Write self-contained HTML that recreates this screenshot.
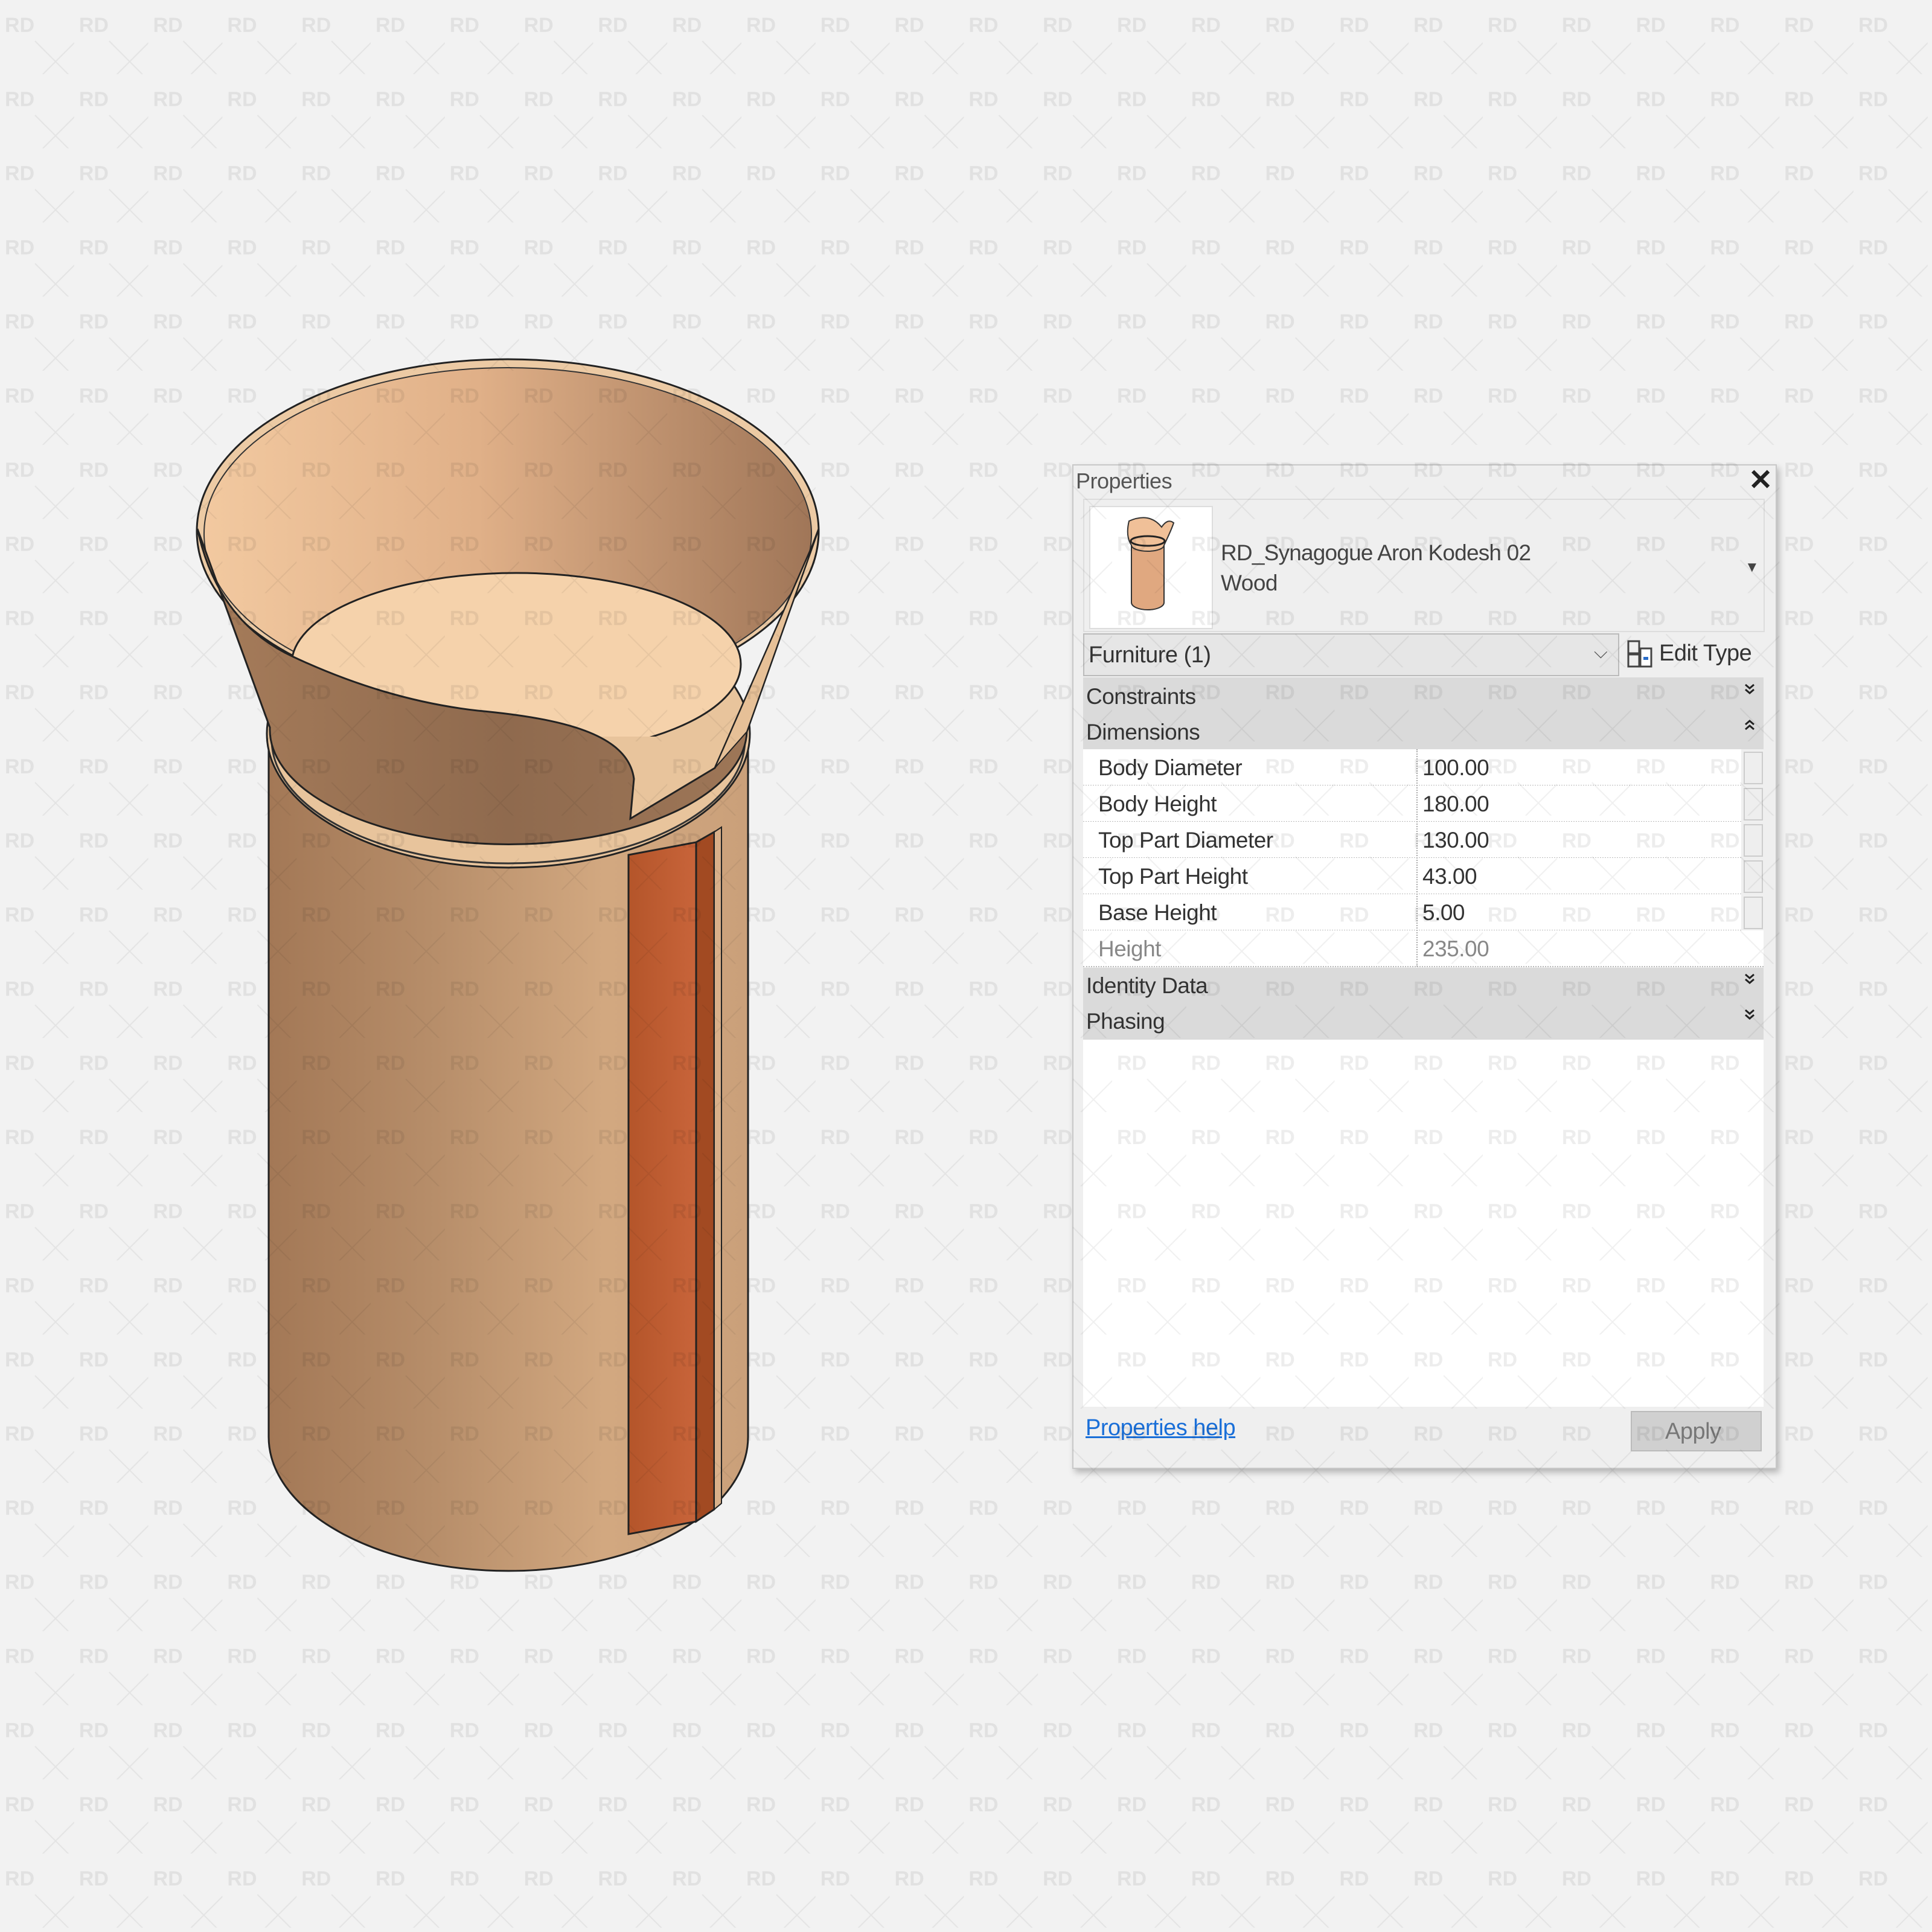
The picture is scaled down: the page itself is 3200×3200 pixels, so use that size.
<!DOCTYPE html>
<html><head><meta charset="utf-8"><style>
html,body{margin:0;padding:0}
body{width:3200px;height:3200px;background:#f2f2f2;position:relative;overflow:hidden;font-family:"Liberation Sans",sans-serif}
.a{position:absolute}
.t{position:absolute;font-size:37px;color:#333;line-height:1;white-space:nowrap;letter-spacing:-0.5px}
.band{position:absolute;left:1794px;width:1127px;background:#dadada}
.row{position:absolute;left:1794px;width:1090px;height:59px;background:#fff;border-bottom:2px dotted #bbb}
.sc{position:absolute;left:2888px;width:28px;height:50px;background:#eee;border:2px solid #ccc}
.chev{position:absolute;left:2886px}
</style></head><body>

<svg class="a" style="left:0;top:0" width="3200" height="3200" viewBox="0 0 3200 3200">
<defs>
<linearGradient id="body" x1="0" x2="1">
<stop offset="0" stop-color="#a37856"/><stop offset="0.35" stop-color="#b78e6a"/><stop offset="0.7" stop-color="#d2a880"/><stop offset="1" stop-color="#caa07a"/></linearGradient>
<linearGradient id="cone" x1="0" x2="1">
<stop offset="0" stop-color="#a67c5a"/><stop offset="0.5" stop-color="#8f6a4e"/><stop offset="1" stop-color="#a27a5a"/></linearGradient>
<linearGradient id="inner" x1="0" x2="1">
<stop offset="0" stop-color="#f2c9a0"/><stop offset="0.45" stop-color="#e0b088"/><stop offset="1" stop-color="#a07658"/></linearGradient>
<linearGradient id="red" x1="0" x2="1">
<stop offset="0" stop-color="#b4552a"/><stop offset="1" stop-color="#c8643a"/></linearGradient>
<clipPath id="cl"><path d="M338,880 A503,275 0 0 1 1344,880 L1225,1220 L455,1220 Z"/></clipPath>
</defs>
<!-- body -->
<path d="M445,1215 L445,2380 A397,222 0 0 0 1239,2380 L1239,1215 Z" fill="url(#body)" stroke="#222" stroke-width="3"/>
<path d="M1041,1416 L1153,1395 L1153,2520 L1041,2541 Z" fill="url(#red)" stroke="#222" stroke-width="3"/>
<path d="M1153,1395 L1183,1378 L1183,2500 L1153,2520 Z" fill="#a24a22" stroke="#222" stroke-width="3"/>
<path d="M1183,1378 L1195,1370 L1195,2490 L1183,2500 Z" fill="#d9b08a" stroke="#222" stroke-width="2"/>
<!-- ring -->
<ellipse cx="842" cy="1215" rx="400" ry="222" fill="#e8c49c" stroke="#222" stroke-width="3"/>
<path d="M450,1225 A392,205 0 0 0 1234,1225" fill="none" stroke="#333" stroke-width="3"/>
<!-- inner cone -->
<ellipse cx="841" cy="880" rx="515" ry="285" fill="#eccaa4" stroke="#222" stroke-width="3"/>
<ellipse cx="841" cy="884" rx="503" ry="275" fill="url(#inner)" stroke="#333" stroke-width="2"/>
<!-- floor -->
<g clip-path="url(#cl)"><ellipse cx="855" cy="1100" rx="372" ry="151" fill="#f5d2ab" stroke="#222" stroke-width="3"/></g>
<!-- outer front face -->
<path d="M327,876 Q360,1030 486,1088 Q640,1160 791,1177 C930,1190 1040,1215 1050,1290 L1044,1356 L1184,1272 L1345,905 L1356,876 L1237,1212 A395,190 0 0 1 447,1205 Z" fill="url(#cone)" stroke="#222" stroke-width="3"/>
<path d="M1184,1272 L1345,905 L1356,876 L1237,1212 Z" fill="#e6c097" stroke="#222" stroke-width="2"/>
</svg>

<!-- panel -->
<div class="a" style="left:1776px;top:769px;width:1163px;height:1660px;background:#efefef;border:2px solid #c8c8c8;box-shadow:4px 6px 10px rgba(0,0,0,0.25)"></div>
<div class="t" style="left:1782px;top:779px;font-size:36px;color:#555">Properties</div>
<div class="t" style="left:2896px;top:772px;font-size:48px;color:#222;font-weight:bold">✕</div>
<div class="a" style="left:1794px;top:826px;width:1125px;height:217px;border:2px solid #ddd"></div>
<div class="a" style="left:1804px;top:838px;width:201px;height:200px;background:#fff;border:2px solid #ddd"></div>
<svg class="a" style="left:1804px;top:838px" width="201" height="200">
<path d="M70,60 L70,160 A27,12 0 0 0 124,160 L124,60 Z" fill="#e0a880" stroke="#333" stroke-width="2"/>
<path d="M66,25 Q60,50 70,65 A27,10 0 0 0 124,65 Q136,40 140,28 Q130,20 120,35 Q100,10 66,25Z" fill="#f0c098" stroke="#333" stroke-width="2"/>
<ellipse cx="97" cy="58" rx="28" ry="8" fill="none" stroke="#222" stroke-width="3"/>
</svg>
<div class="t" style="left:2022px;top:897px;font-size:37px;color:#444;letter-spacing:-0.8px">RD_Synagogue Aron Kodesh 02</div>
<div class="t" style="left:2022px;top:947px;font-size:37px;color:#444">Wood</div>
<div class="t" style="left:2890px;top:928px;font-size:24px;color:#444">▼</div>
<div class="a" style="left:1794px;top:1049px;width:884px;height:67px;background:#e6e6e6;border:2px solid #bbb"></div>
<div class="t" style="left:1803px;top:1066px;font-size:38px">Furniture (1)</div>
<div class="t" style="left:2640px;top:1066px;font-size:30px;color:#555">⌵</div>
<svg class="a" style="left:2695px;top:1060px" width="44" height="48"><rect x="2" y="2" width="18" height="20" fill="none" stroke="#444" stroke-width="3"/><rect x="2" y="24" width="18" height="20" fill="none" stroke="#444" stroke-width="3"/><rect x="22" y="14" width="18" height="30" fill="#fff" stroke="#444" stroke-width="3"/><rect x="27" y="28" width="8" height="5" fill="#2a6dc8"/></svg>
<div class="t" style="left:2748px;top:1063px;font-size:38px">Edit Type</div>

<div class="band" style="top:1122px;height:119px"></div>
<div class="t" style="left:1799px;top:1135px">Constraints</div>
<svg class="chev" style="top:1130px" width="24" height="24"><path d="M5,4 L12,10 L19,4 M5,12 L12,18 L19,12" fill="none" stroke="#222" stroke-width="3"/></svg>
<div class="t" style="left:1799px;top:1194px">Dimensions</div>
<svg class="chev" style="top:1190px" width="24" height="24"><path d="M5,10 L12,4 L19,10 M5,18 L12,12 L19,18" fill="none" stroke="#222" stroke-width="3"/></svg>

<div class="row" style="top:1241px"></div><div class="sc" style="top:1245px"></div>
<div class="row" style="top:1301px"></div><div class="sc" style="top:1305px"></div>
<div class="row" style="top:1361px"></div><div class="sc" style="top:1365px"></div>
<div class="row" style="top:1421px"></div><div class="sc" style="top:1425px"></div>
<div class="row" style="top:1481px"></div><div class="sc" style="top:1485px"></div>
<div class="row" style="top:1541px;width:1127px"></div>
<div class="a" style="left:2346px;top:1241px;width:0;height:360px;border-left:2px dotted #aaa"></div>
<div class="t" style="left:1819px;top:1253px">Body Diameter</div><div class="t" style="left:2356px;top:1253px">100.00</div>
<div class="t" style="left:1819px;top:1313px">Body Height</div><div class="t" style="left:2356px;top:1313px">180.00</div>
<div class="t" style="left:1819px;top:1373px">Top Part Diameter</div><div class="t" style="left:2356px;top:1373px">130.00</div>
<div class="t" style="left:1819px;top:1433px">Top Part Height</div><div class="t" style="left:2356px;top:1433px">43.00</div>
<div class="t" style="left:1819px;top:1493px">Base Height</div><div class="t" style="left:2356px;top:1493px">5.00</div>
<div class="t" style="left:1819px;top:1553px;color:#888">Height</div><div class="t" style="left:2356px;top:1553px;color:#888">235.00</div>

<div class="band" style="top:1603px;height:119px"></div>
<div class="t" style="left:1799px;top:1614px">Identity Data</div>
<svg class="chev" style="top:1610px" width="24" height="24"><path d="M5,4 L12,10 L19,4 M5,12 L12,18 L19,12" fill="none" stroke="#222" stroke-width="3"/></svg>
<div class="t" style="left:1799px;top:1673px">Phasing</div>
<svg class="chev" style="top:1669px" width="24" height="24"><path d="M5,4 L12,10 L19,4 M5,12 L12,18 L19,12" fill="none" stroke="#222" stroke-width="3"/></svg>
<div class="a" style="left:1794px;top:1722px;width:1127px;height:608px;background:#fff"></div>
<div class="t" style="left:1798px;top:2346px;font-size:38px;color:#1a6fd8;text-decoration:underline">Properties help</div>
<div class="a" style="left:2701px;top:2337px;width:213px;height:63px;background:#d0d0d0;border:2px solid #bbb"></div>
<div class="t" style="left:2758px;top:2352px;font-size:38px;color:#777">Apply</div>

<!-- watermark overlay -->
<svg class="a" style="left:0;top:0;pointer-events:none" width="3200" height="3200">
<defs><pattern id="wm" x="0" y="0" width="122.8" height="122.8" patternUnits="userSpaceOnUse">
<text x="8" y="53" font-family="Liberation Sans" font-weight="bold" font-size="34" fill="#000" fill-opacity="0.07">RD</text>
<path d="M58,68 L126,136 M126,68 L58,136" stroke="#000" stroke-opacity="0.06" stroke-width="2"/>
</pattern></defs>
<rect width="3200" height="3200" fill="url(#wm)"/>
</svg>
</body></html>
